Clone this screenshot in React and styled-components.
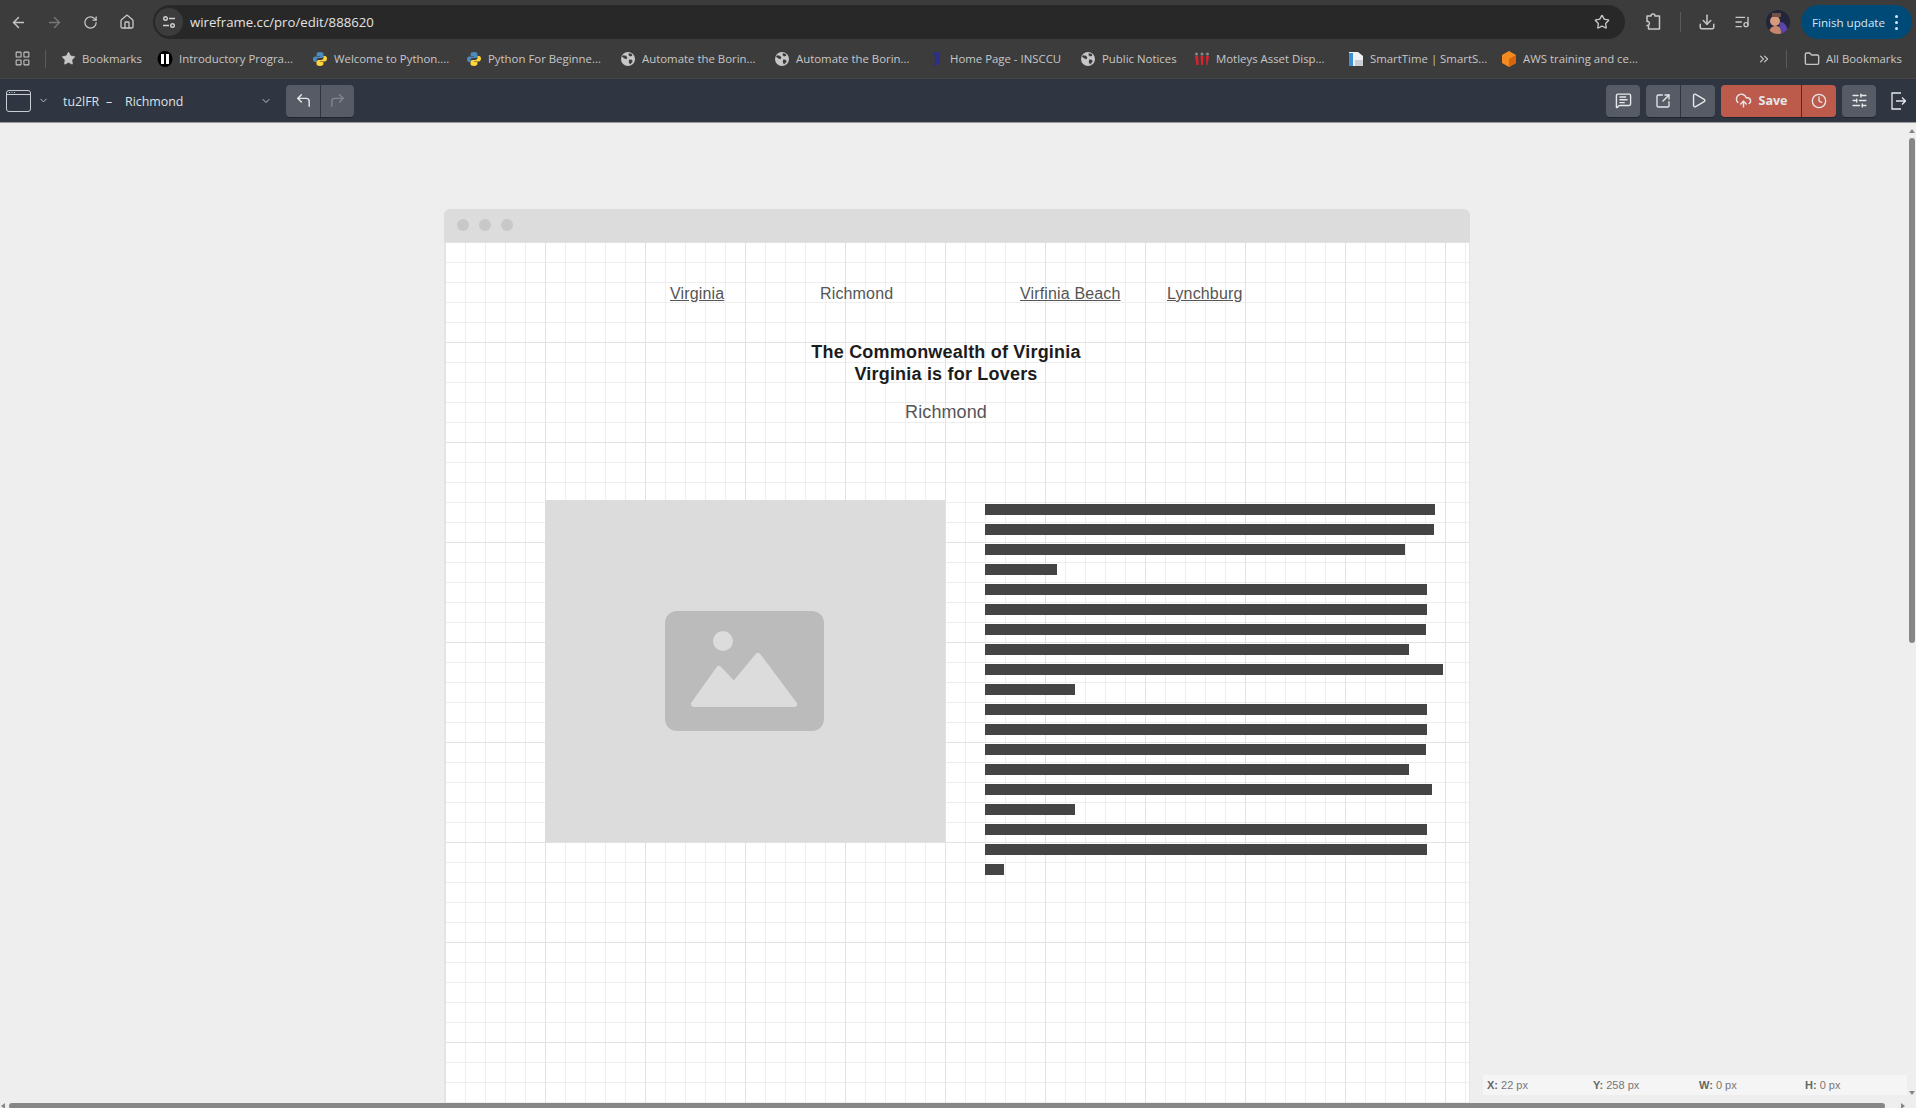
import React from 'react'
import styled, { createGlobalStyle } from 'styled-components'
import {
  ArrowLeft, ArrowRight, RotateCw, House, Star, Download, ListMusic, LayoutGrid, Folder,
  ChevronsRight, ChevronDown, CornerUpLeft, CornerUpRight, MessageSquareText, SquareArrowOutUpRight,
  Play, CloudUpload, Clock, SlidersHorizontal,
} from 'lucide-react'

const GlobalStyle = createGlobalStyle`
  html, body { margin: 0; height: 100%; overflow: hidden; }
  body { font-family: "Liberation Sans", Arial, sans-serif; background: #eeeeee; }
`

const Page = styled.div`
  width: 1916px;
  height: 1108px;
  display: flex;
  flex-direction: column;
  overflow: hidden;
`

const Spacer = styled.div`
  width: ${p => p.$w}px;
  flex: none;
`

/* browser chrome */
const BrowserBar = styled.div`
  height: 44px;
  flex: none;
  background: #3c3c3c;
  display: flex;
  align-items: center;
  color: #c7c7c7;
  font-family: "Open Sans", sans-serif;
`

const NavSlot = styled.div`
  width: ${p => p.$w}px;
  height: 34px;
  flex: none;
  display: flex;
  align-items: center;
  justify-content: center;
  color: ${p => (p.$dim ? '#777777' : '#c7c7c7')};
`

const Omnibox = styled.div`
  width: 1472px;
  height: 34px;
  flex: none;
  margin-left: 1px;
  padding: 0 15px 0 2px;
  box-sizing: border-box;
  border-radius: 17px;
  background: #282828;
  display: flex;
  align-items: center;
`

const SiteInfo = styled.div`
  width: 28px;
  height: 28px;
  border-radius: 50%;
  background: #3c3c3c;
  display: flex;
  align-items: center;
  justify-content: center;
  flex: none;
`

const Url = styled.span`
  margin-left: 7px;
  font-size: 13.2px;
  color: #e3e3e3;
  flex: 1;
`

const BarDivider = styled.div`
  width: 1px;
  height: ${p => p.$h}px;
  flex: none;
  background: #5a5a5a;
`

const Avatar = styled.div`
  width: 24px;
  height: 24px;
  flex: none;
  margin-right: 11px;
  border-radius: 50%;
  overflow: hidden;
`

const UpdatePill = styled.div`
  width: 111px;
  height: 34px;
  flex: none;
  box-sizing: border-box;
  padding: 0 14px 0 11px;
  border-radius: 17px;
  background: #004a77;
  color: #d3e9f7;
  font-size: 11.6px;
  display: flex;
  align-items: center;
  justify-content: space-between;
`

const Dots = styled.span`
  display: flex;
  flex-direction: column;
  gap: 3px;
  i { width: 3px; height: 3px; border-radius: 50%; background: #d3e9f7; display: block; }
`

const BookmarkBar = styled.div`
  height: 35px;
  flex: none;
  background: #3c3c3c;
  border-bottom: 1px solid #464646;
  box-sizing: border-box;
  padding-bottom: 5px;
  display: flex;
  align-items: center;
  color: #c7c7c7;
  font-family: "Open Sans", sans-serif;
  font-size: 11.4px;
`

const Chip = styled.div`
  width: ${p => p.$w}px;
  flex: none;
  display: flex;
  align-items: center;
  gap: 6px;
  white-space: nowrap;
  svg { flex: none; }
`

/* wireframe app bar */
const AppBar = styled.div`
  height: 44px;
  flex: none;
  box-sizing: border-box;
  background: #2f3541;
  border-bottom: 1px solid #9a9a9a;
  display: flex;
  align-items: center;
  color: #d6d8dc;
  font-family: "Open Sans", sans-serif;
  font-size: 12.4px;
`

const AppLabel = styled.span`
  width: ${p => p.$w}px;
  flex: none;
  padding-top: 1px;
  color: #dfe1e4;
`

const ToolGroup = styled.div`
  display: flex;
  flex: none;
  margin-left: ${p => p.$ml || 0}px;
  border-radius: 4px;
  overflow: hidden;
  box-shadow: 0 1px 0 #20242c;
`

const ToolButton = styled.div`
  width: ${p => p.$w || 34}px;
  height: 32px;
  box-sizing: border-box;
  display: flex;
  align-items: center;
  justify-content: center;
  gap: 7px;
  background: ${p => (p.$danger ? '#bc5b4c' : '#565b65')};
  color: ${p => (p.$off ? '#80858e' : '#e6e7e9')};
  font-weight: 700;
  font-size: 12.5px;
  & + & { border-left: 1px solid #2f3541; }
`

/* workspace */
const Workspace = styled.div`
  flex: 1;
  min-height: 0;
  display: flex;
`

const Stage = styled.div`
  position: relative;
  flex: 1;
  overflow: hidden;
  padding: 86px 0 0 444px;
  background: #eeeeee;
`

const Win = styled.div`
  width: 1026px;
  height: 100%;
`

const WinTitle = styled.div`
  height: 33px;
  box-sizing: border-box;
  padding: 0 0 1px 13px;
  background: #dcdcdc;
  border-radius: 6px 6px 0 0;
  display: flex;
  align-items: center;
  gap: 10px;
`

const WinDot = styled.span`
  width: 12px;
  height: 12px;
  border-radius: 50%;
  background: #c8c8c8;
`

const Canvas = styled.div`
  height: 861px;
  margin: 0 1px;
  box-shadow: -1px 0 0 #e6e6e6, 1px 0 0 #e6e6e6;
  background-color: #ffffff;
  background-image:
    linear-gradient(to right, #e2e2e2 1px, transparent 1px),
    linear-gradient(to bottom, #e2e2e2 1px, transparent 1px),
    linear-gradient(to right, #eeeeee 1px, transparent 1px),
    linear-gradient(to bottom, #eeeeee 1px, transparent 1px);
  background-size: 100px 100px, 100px 100px, 20px 20px, 20px 20px;
`

const NavRow = styled.div`
  display: flex;
  padding: 43px 0 0 225px;
  font-size: 16px;
  line-height: 18px;
  letter-spacing: 0.15px;
  color: #555555;
`

const NavItem = styled.span`
  width: ${p => p.$w}px;
  flex: none;
  text-decoration: ${p => (p.$link ? 'underline' : 'none')};
`

const Heading = styled.h1`
  width: 1002px;
  margin: 38px 0 0;
  font-size: 18px;
  line-height: 22px;
  font-weight: 700;
  letter-spacing: 0.2px;
  text-align: center;
  color: #1c1c1c;
`

const SubHeading = styled.h2`
  width: 1002px;
  margin: 16px 0 0;
  font-size: 18px;
  line-height: 22px;
  font-weight: 400;
  letter-spacing: 0.1px;
  text-align: center;
  color: #555555;
`

const ContentRow = styled.div`
  display: flex;
  margin: 77px 0 0 100px;
`

const ImageBox = styled.div`
  width: 400px;
  height: 342px;
  flex: none;
  box-sizing: border-box;
  padding-right: 1px;
  background: #dcdcdc;
  display: flex;
  align-items: center;
  justify-content: center;
`

const TextLines = styled.div`
  margin-left: 40px;
  padding-top: 4px;
  display: flex;
  flex-direction: column;
  gap: 9px;
`

const TextLine = styled.div`
  width: ${p => p.$w}px;
  height: 11px;
  background: #444444;
`

/* scrollbars and status */
const VScroll = styled.div`
  width: 8px;
  flex: none;
  background: #eeeeee;
  display: flex;
  flex-direction: column;
  align-items: center;
`

const VThumb = styled.div`
  width: 6px;
  height: 505px;
  margin: 5px 0 auto;
  background: #868686;
  border-radius: 3px;
`

const ScrollArrow = styled.div`
  width: 0;
  height: 0;
  flex: none;
  border-left: 3px solid transparent;
  border-right: 3px solid transparent;
  border-${p => (p.$down ? 'top' : 'bottom')}: 4px solid #868686;
  margin: ${p => (p.$down ? '0 0 8px' : '6px 0 0')};
`

const SideArrow = styled.div`
  width: 0;
  height: 0;
  flex: none;
  margin-top: 0;
  border-top: 3px solid transparent;
  border-bottom: 3px solid transparent;
  border-${p => (p.$right ? 'left' : 'right')}: 4px solid #868686;
`

const HScroll = styled.div`
  height: 5px;
  flex: none;
  background: #eeeeee;
  display: flex;
  padding-left: 1px;
`

const HThumb = styled.div`
  width: 1876px;
  height: 6px;
  margin: 0 16px 0 4px;
  background: #868686;
  border-radius: 3px;
`

const StatusPanel = styled.div`
  position: absolute;
  right: 1px;
  bottom: 8px;
  width: 424px;
  height: 20px;
  box-sizing: border-box;
  padding-left: 4px;
  background: #f5f5f5;
  display: grid;
  grid-template-columns: repeat(4, 106px);
  align-items: center;
  font-size: 11px;
  color: #777777;
  b { color: #666666; }
`

const Python = () => (
  <svg width="16" height="16" viewBox="0 0 16 16">
    <path d="M8 1C5.5 1 4.6 1.9 4.6 3.2V5h3.6v.6H3.2C1.8 5.6 1 6.7 1 8.2s.8 2.8 2 2.8h1.5V9.3c0-1.3 1-2.2 2.3-2.2h2.8c1.1 0 1.9-.9 1.9-2V3.2C11.500 1.8 10.2 1 8 1z" fill="#4b8bbe" />
    <path d="M8 15c2.500 0 3.4-.9 3.4-2.2V11H7.800v-.6h5C14.200 10.400 15 9.300 15 7.800S14.200 5 13 5h-1.500v1.700c0 1.300-1 2.200-2.300 2.200H6.400c-1.100 0-1.900.9-1.900 2v1.900C4.500 14.200 5.800 15 8 15z" fill="#ffd43b" />
  </svg>
)

const Globe = () => (
  <svg width="16" height="16" viewBox="0 0 16 16">
    <circle cx="8" cy="8" r="7" fill="#c7c7c7" />
    <path d="M3 4.200l3 .6 1.400 1.800-1 1.600-2-.6L2 5.800zM8.600 2.200l3 .6.800 2-2.400.8-1.400-1.400zM9 8.400l3 .4.600 2-2.600 2.600-1.200-2.200z" fill="#3c3c3c" />
  </svg>
)

const Intro = () => (
  <svg width="16" height="16" viewBox="0 0 16 16">
    <ellipse cx="8" cy="8" rx="7.500" ry="8" fill="#000" />
    <rect x="4" y="3" width="3" height="10" fill="#fff" />
    <rect x="9" y="3" width="3" height="10" fill="#fff" />
  </svg>
)

const Inscc = () => (
  <svg width="16" height="16" viewBox="0 0 16 16">
    <path d="M5 1h7v8c0 3-2 5.500-7 6 2-2.500 2-4 2-6.500S6.500 3 5 1z" fill="#2b2f86" />
  </svg>
)

const Motleys = () => (
  <svg width="16" height="16" viewBox="0 0 16 16">
    <path d="M1 5l3 0 .6 9H2.500zM6.500 5h3l-.6 9H7.100zM12 5l3 0-1.500 9h-1z" fill="#e0202c" />
    <circle cx="2.500" cy="3" r="1.500" fill="#8a8a8a" />
    <circle cx="8" cy="3" r="1.500" fill="#8a8a8a" />
    <circle cx="13.500" cy="3" r="1.500" fill="#8a8a8a" />
  </svg>
)

const SmartTime = () => (
  <svg width="16" height="16" viewBox="0 0 16 16">
    <path d="M1 1h9l5 4v10H1z" fill="#eef1f4" />
    <rect x="1" y="2" width="4" height="13" fill="#3f8fd2" />
    <rect x="7" y="9" width="8" height="6" fill="#c9ced4" />
  </svg>
)

const Aws = () => (
  <svg width="16" height="16" viewBox="0 0 16 16">
    <path d="M8 0l7 4v8l-7 4-7-4V4z" fill="#f58a1f" />
    <path d="M8 8l7-4v8l-7 4z" fill="#d9650f" />
  </svg>
)

const SiteInfoIcon = () => (
  <svg width="16" height="16" viewBox="0 0 16 16" fill="none" stroke="#d0d0d0" strokeWidth="1.400">
    <circle cx="4.500" cy="4.500" r="1.800" />
    <path d="M8 4.500h6M2 11.500h6" />
    <circle cx="11.500" cy="11.500" r="1.800" />
  </svg>
)

const ExtensionIcon = () => (
  <svg width="18" height="18" viewBox="0 0 18 18" fill="none" stroke="#c7c7c7" strokeWidth="1.500" strokeLinejoin="round">
    <path d="M3 3h4a2 2 0 0 1 4 0h4.500v13H4.500v-3.500H3a2.200 2.200 0 0 0 1.500-4H3z" />
  </svg>
)

const WindowIcon = () => (
  <svg width="25" height="22" viewBox="0 0 25 22" fill="none" stroke="#c9ccd1">
    <rect x=".5" y=".5" width="24" height="21" rx="2.500" />
    <path d="M1 4.500h23" />
    <path d="M3 2.500h1M5.500 2.500h1M8 2.500h1" />
  </svg>
)

const ExitIcon = () => (
  <svg width="15" height="18" viewBox="0 0 15 18" fill="none" stroke="#e6e7e9" strokeWidth="1.300">
    <path d="M10 1H1v16h9M5 9h9.500M11 5.500L14.500 9 11 12.500" />
  </svg>
)

const AvatarArt = () => (
  <svg width="24" height="24" viewBox="0 0 24 24">
    <rect width="24" height="24" fill="#23263a" />
    <path d="M14 12c4 0 8 3 8 12H12z" fill="#5b45a8" />
    <circle cx="9" cy="11" r="5" fill="#d79a7c" />
    <path d="M3 24c0-6 3-8 7-8s5 3 5 8z" fill="#c8866c" />
    <path d="M6 3h9v4H6z" fill="#6e5147" />
  </svg>
)

const PlaceholderIcon = () => (
  <svg width="159" height="120" viewBox="0 0 159 120">
    <rect width="159" height="120" rx="12" fill="#bbbbbb" />
    <circle cx="58" cy="30" r="10" fill="#dcdcdc" />
    <path
      d="M29 93L54 58L69 74L93 45L129 93Z"
      fill="#dcdcdc"
      stroke="#dcdcdc"
      strokeWidth="6"
      strokeLinejoin="round"
    />
  </svg>
)

const bookmarks = [
  { icon: <Star size={15} fill="#c7c7c7" strokeWidth={1} />, label: 'Bookmarks', w: 96 },
  { icon: <Intro />, label: 'Introductory Progra...', w: 155 },
  { icon: <Python />, label: 'Welcome to Python....', w: 154 },
  { icon: <Python />, label: 'Python For Beginne...', w: 154 },
  { icon: <Globe />, label: 'Automate the Borin...', w: 154 },
  { icon: <Globe />, label: 'Automate the Borin...', w: 154 },
  { icon: <Inscc />, label: 'Home Page - INSCCU', w: 152 },
  { icon: <Globe />, label: 'Public Notices', w: 114 },
  { icon: <Motleys />, label: 'Motleys Asset Disp...', w: 154 },
  { icon: <SmartTime />, label: 'SmartTime | SmartS...', w: 153 },
  { icon: <Aws />, label: 'AWS training and ce...', w: 248 },
]

const lineWidths = [450, 449, 420, 72, 442, 442, 441, 424, 458, 90, 442, 442, 441, 424, 447, 90, 442, 442, 19]

function App() {
  return (
    <Page>
      <GlobalStyle />
      <BrowserBar>
        <NavSlot $w={37}><ArrowLeft size={17} /></NavSlot>
        <NavSlot $w={35} $dim><ArrowRight size={17} /></NavSlot>
        <NavSlot $w={37}><RotateCw size={15} /></NavSlot>
        <NavSlot $w={35}><House size={16} /></NavSlot>
        <Spacer $w={8} />
        <Omnibox>
          <SiteInfo><SiteInfoIcon /></SiteInfo>
          <Url>wireframe.cc/pro/edit/888620</Url>
          <Star size={16} />
        </Omnibox>
        <NavSlot $w={55}><ExtensionIcon /></NavSlot>
        <BarDivider $h={20} />
        <NavSlot $w={51}><Download size={18} /></NavSlot>
        <NavSlot $w={19}><ListMusic size={16} /></NavSlot>
        <Spacer $w={15} />
        <Avatar><AvatarArt /></Avatar>
        <UpdatePill>
          Finish update
          <Dots><i /><i /><i /></Dots>
        </UpdatePill>
      </BrowserBar>

      <BookmarkBar>
        <NavSlot $w={45}><LayoutGrid size={17} strokeWidth={1.5} /></NavSlot>
        <BarDivider $h={18} />
        <Spacer $w={15} />
        {bookmarks.map((b, i) => (
          <Chip key={i} $w={b.w}>{b.icon}{b.label}</Chip>
        ))}
        <NavSlot $w={30}><ChevronsRight size={14} /></NavSlot>
        <Spacer $w={7} />
        <BarDivider $h={18} />
        <Spacer $w={17} />
        <Chip $w={110}><Folder size={16} />All Bookmarks</Chip>
      </BookmarkBar>

      <AppBar>
        <Spacer $w={6} />
        <WindowIcon />
        <NavSlot $w={25}><ChevronDown size={11} /></NavSlot>
        <Spacer $w={7} />
        <AppLabel $w={43}>tu2lFR</AppLabel>
        <AppLabel $w={19}>–</AppLabel>
        <AppLabel $w={131}>Richmond</AppLabel>
        <NavSlot $w={20}><ChevronDown size={12} /></NavSlot>
        <ToolGroup $ml={10}>
          <ToolButton><CornerUpLeft size={17} /></ToolButton>
          <ToolButton $off><CornerUpRight size={17} /></ToolButton>
        </ToolGroup>
        <ToolGroup $ml={1252}>
          <ToolButton><MessageSquareText size={17} /></ToolButton>
        </ToolGroup>
        <ToolGroup $ml={6}>
          <ToolButton><SquareArrowOutUpRight size={16} /></ToolButton>
          <ToolButton $w={35}><Play size={17} /></ToolButton>
        </ToolGroup>
        <ToolGroup $ml={6}>
          <ToolButton $danger $w={80}><CloudUpload size={17} />Save</ToolButton>
          <ToolButton $danger $w={35}><Clock size={16} /></ToolButton>
        </ToolGroup>
        <ToolGroup $ml={6}>
          <ToolButton><SlidersHorizontal size={17} /></ToolButton>
        </ToolGroup>
        <Spacer $w={15} />
        <ExitIcon />
      </AppBar>

      <Workspace>
        <Stage>
          <Win>
            <WinTitle><WinDot /><WinDot /><WinDot /></WinTitle>
            <Canvas>
              <NavRow>
                <NavItem $w={150} $link>Virginia</NavItem>
                <NavItem $w={200}>Richmond</NavItem>
                <NavItem $w={147} $link>Virfinia Beach</NavItem>
                <NavItem $w={100} $link>Lynchburg</NavItem>
              </NavRow>
              <Heading>The Commonwealth of Virginia<br />Virginia is for Lovers</Heading>
              <SubHeading>Richmond</SubHeading>
              <ContentRow>
                <ImageBox><PlaceholderIcon /></ImageBox>
                <TextLines>
                  {lineWidths.map((w, i) => (
                    <TextLine key={i} $w={w} />
                  ))}
                </TextLines>
              </ContentRow>
            </Canvas>
          </Win>
          <StatusPanel>
            <span><b>X:</b> 22 px</span>
            <span><b>Y:</b> 258 px</span>
            <span><b>W:</b> 0 px</span>
            <span><b>H:</b> 0 px</span>
          </StatusPanel>
        </Stage>
        <VScroll>
          <ScrollArrow />
          <VThumb />
          <ScrollArrow $down />
        </VScroll>
      </Workspace>
      <HScroll>
        <SideArrow />
        <HThumb />
        <SideArrow $right />
      </HScroll>
    </Page>
  )
}

export default App
